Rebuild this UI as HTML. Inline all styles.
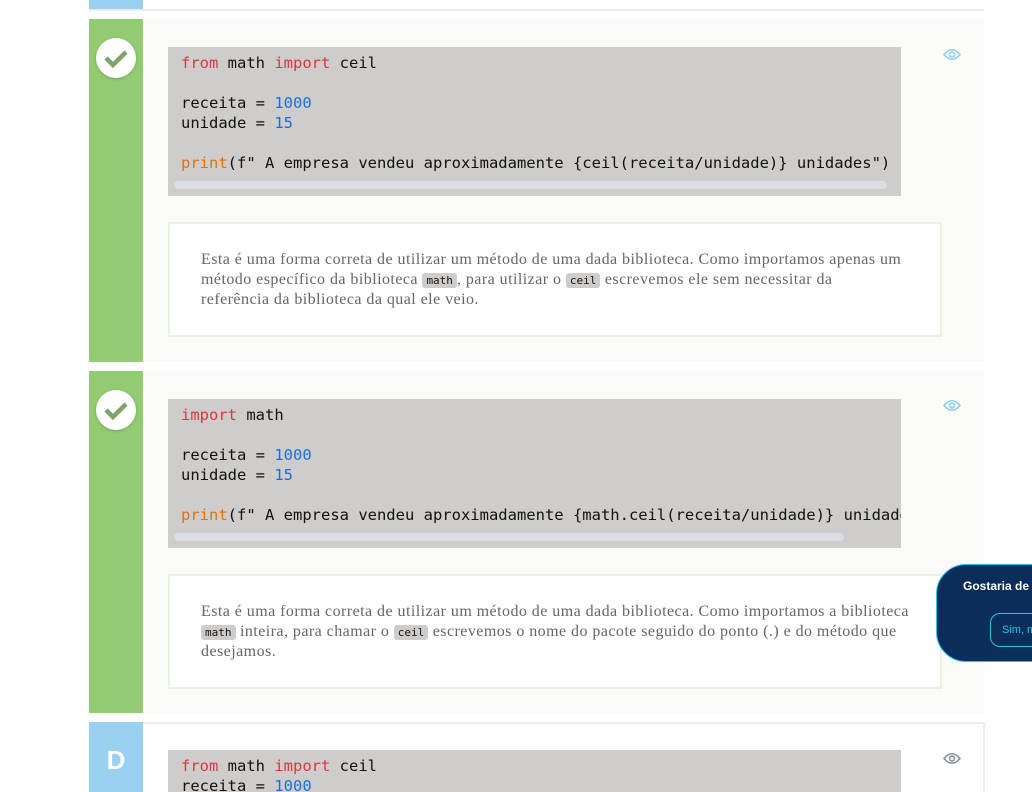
<!DOCTYPE html>
<html><head><meta charset="utf-8"><style>
html,body{margin:0;width:1032px;height:792px;overflow:hidden}
body{background:#fff;position:relative;font-family:"Liberation Sans",sans-serif}
.card{position:absolute;left:89px;width:895px;background:#fafbf9}
.bar{position:absolute;left:0;top:0;bottom:0;width:54px;background:#93cb72}
.chk{position:absolute;left:7px;top:19px;width:40px;height:40px;border-radius:50%;background:#fff;box-shadow:0 1px 3px rgba(0,0,0,.2)}
.code{position:absolute;left:79px;width:733px;background:#cfcdcb;font-family:"DejaVu Sans Mono",monospace;font-size:15.5px;line-height:20px;color:#111;overflow:hidden;white-space:pre}
.code .t{position:absolute;left:13px;top:6px}
.sb{position:absolute;left:6px;height:8px;border-radius:4px;background:#d8dee3}
.k{color:#d9363e}.n{color:#1a6ed8}.p{color:#e0700a}
.fb{position:absolute;left:79px;width:774px;height:115px;border:2px solid #e6f3df;background:#fff;box-sizing:border-box}
.fb p{margin:0;position:absolute;left:31px;top:26px;width:712px;font-family:"Liberation Serif",serif;font-size:16px;letter-spacing:0.45px;line-height:19.5px;color:#666}
.fb code{font-family:"DejaVu Sans Mono",monospace;font-size:11px;letter-spacing:0;background:#cfcdcb;color:#111;padding:1px 4px;border-radius:3px}
.eye{position:absolute;left:854px;width:18px;height:13px}
</style></head><body>
<div style="position:absolute;left:89px;top:0;width:895px;height:9px;border-bottom:2px solid #e8eef0;background:#fff"><div style="width:54px;height:9px;background:#9bd1f0"></div></div>

<div class="card" style="top:19px;height:343px">
<div class="bar"><div class="chk"><svg width="40" height="40"><path d="M10 20l7 7 13-13" fill="none" stroke="#7fa36a" stroke-width="4.5"/></svg></div></div>
<div class="code" style="top:28px;height:149px"><div class="t"><span class="k">from</span> math <span class="k">import</span> ceil

receita = <span class="n">1000</span>
unidade = <span class="n">15</span>

<span class="p">print</span>(f" A empresa vendeu aproximadamente {ceil(receita/unidade)} unidades")</div><div class="sb" style="top:134px;width:713px"></div></div>
<svg class="eye" style="top:29px" viewBox="0 0 18 13"><path d="M1 6.5Q9-3 17 6.5Q9 16 1 6.5Z" fill="none" stroke="#8fd0ee" stroke-width="1.6"/><circle cx="9" cy="6.5" r="2.4" fill="none" stroke="#8fd0ee" stroke-width="1.6"/></svg>
<div class="fb" style="top:203px"><p style="width:702px">Esta é uma forma correta de utilizar um método de uma dada biblioteca. Como importamos apenas um método específico da biblioteca <code>math</code>, para utilizar o <code>ceil</code> escrevemos ele sem necessitar da referência da biblioteca da qual ele veio.</p></div>
</div>

<div class="card" style="top:371px;height:342px">
<div class="bar"><div class="chk"><svg width="40" height="40"><path d="M10 20l7 7 13-13" fill="none" stroke="#7fa36a" stroke-width="4.5"/></svg></div></div>
<div class="code" style="top:28px;height:149px"><div class="t"><span class="k">import</span> math

receita = <span class="n">1000</span>
unidade = <span class="n">15</span>

<span class="p">print</span>(f" A empresa vendeu aproximadamente {math.ceil(receita/unidade)} unidades")</div><div class="sb" style="top:134px;width:670px"></div></div>
<svg class="eye" style="top:28px" viewBox="0 0 18 13"><path d="M1 6.5Q9-3 17 6.5Q9 16 1 6.5Z" fill="none" stroke="#8fd0ee" stroke-width="1.6"/><circle cx="9" cy="6.5" r="2.4" fill="none" stroke="#8fd0ee" stroke-width="1.6"/></svg>
<div class="fb" style="top:203px;height:115px"><p>Esta é uma forma correta de utilizar um método de uma dada biblioteca. Como importamos a biblioteca <code>math</code> inteira, para chamar o <code>ceil</code> escrevemos o nome do pacote seguido do ponto (.) e do método que desejamos.</p></div>
</div>

<div class="card" style="top:722px;height:80px;background:#fff;border:2px solid #e8eef0;border-left:none;box-sizing:border-box;width:896px">
<div class="bar" style="top:-2px;background:#9bd1f0;color:#fff;font-weight:bold;font-size:26px;text-align:center;line-height:76px">D</div>
<div class="code" style="top:26px;height:60px"><div class="t"><span class="k">from</span> math <span class="k">import</span> ceil
receita = <span class="n">1000</span></div></div>
<svg class="eye" style="top:28px" viewBox="0 0 18 13"><path d="M1 6.5Q9-3 17 6.5Q9 16 1 6.5Z" fill="none" stroke="#8a9298" stroke-width="1.6"/><circle cx="9" cy="6.5" r="2.4" fill="none" stroke="#8a9298" stroke-width="1.6"/></svg>
</div>

<div style="position:absolute;left:936px;top:564px;width:140px;height:98px;background:#0a2d5a;border:1.5px solid #27c3e8;border-radius:30px;box-sizing:border-box">
<div style="position:absolute;left:26px;top:14px;color:#fff;font-weight:bold;font-size:12px;white-space:nowrap">Gostaria de</div>
<div style="position:absolute;left:53px;top:48px;width:90px;height:34px;border:1.5px solid #27c3e8;border-radius:10px;color:#27c3e8;font-size:11px;line-height:32px;padding-left:11px;box-sizing:border-box;white-space:nowrap">Sim, m</div>
</div>
</body></html>
